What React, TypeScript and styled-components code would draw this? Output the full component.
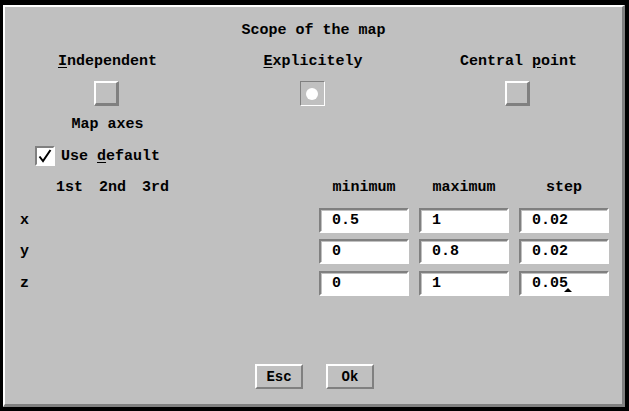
import styled, { createGlobalStyle } from 'styled-components';

const GlobalStyle = createGlobalStyle`
  html, body {
    margin: 0;
    padding: 0;
    background: #000;
  }
  body {
    font-family: "Liberation Mono", "DejaVu Sans Mono", monospace;
    font-size: 15px;
    font-weight: bold;
    color: #000;
  }
`;

const Dialog = styled.div`
  margin: 5px 4px 4px 3px;
  width: 622px;
  height: 402px;
  box-sizing: border-box;
  background: #c0c0c0;
  border-top: 2px solid #fff;
  border-left: 2px solid #fff;
  border-bottom: 3px solid #808080;
  border-right: 3px solid #808080;
  display: flex;
  flex-direction: column;
`;

const Title = styled.div`
  margin-top: 15px;
  height: 18px;
  line-height: 18px;
  text-align: center;
`;

const Options = styled.div`
  margin-top: 13px;
  display: grid;
  grid-template-columns: 205px 206px 205px;
`;

const Option = styled.div`
  display: flex;
  flex-direction: column;
  align-items: center;
`;

const Label = styled.div`
  height: 18px;
  line-height: 18px;
  white-space: pre;
`;

const Key = styled.span`
  text-decoration: underline;
  text-underline-offset: 2px;
`;

const Toggle = styled.div<{ $on?: boolean }>`
  margin-top: 10px;
  margin-right: 2px;
  width: 25px;
  height: 25px;
  box-sizing: border-box;
  display: flex;
  align-items: center;
  justify-content: center;
  border-style: solid;
  border-width: ${(p) => (p.$on ? '1px' : '2px 3px 3px 2px')};
  border-color: ${(p) =>
    p.$on ? '#808080 #fff #fff #808080' : '#fff #808080 #808080 #fff'};
`;

const Dot = styled.div`
  width: 12px;
  height: 12px;
  border-radius: 50%;
  background: #fff;
`;

const SubLabel = styled(Label)`
  margin-top: 10px;
`;

const CheckRow = styled.div`
  margin-top: 12px;
  padding-left: 30px;
  display: flex;
  align-items: center;
  gap: 6px;
`;

const CheckBox = styled.div`
  width: 20px;
  height: 20px;
  box-sizing: border-box;
  border-style: solid;
  border-width: 2px;
  border-color: #808080 #fff #fff #808080;
  background: #fff;
  display: flex;
  align-items: center;
  justify-content: center;
`;

const CheckText = styled(Label)`
  padding-top: 2px;
`;

const Table = styled.div`
  margin-top: 10px;
  padding: 0 13px 0 13px;
  display: grid;
  grid-template-columns: 38px 43px 43px 1fr 100px 100px 90px;
  grid-auto-rows: 25px;
  row-gap: 6.5px;
  align-items: center;
`;

const Line = styled.div`
  display: contents;
`;

const Head = styled.div<{ $wide?: boolean }>`
  width: ${(p) => (p.$wide ? '90px' : 'auto')};
  text-align: ${(p) => (p.$wide ? 'center' : 'left')};
  line-height: 18px;
  align-self: start;
  padding-top: 3px;
`;

const Axis = styled.div`
  padding-left: 2px;
  padding-top: 1px;
  line-height: 18px;
`;

const Field = styled.div`
  position: relative;
  width: 90px;
  height: 25px;
  box-sizing: border-box;
  background: #fff;
  border-style: solid;
  border-width: 2px;
  border-color: #808080 #fff #fff #808080;
  box-shadow: inset 1px 1px 0 #c0c0c0;
  padding-left: 11px;
  line-height: 22px;
  white-space: pre;
`;

const Caret = styled.span`
  position: absolute;
  top: 15px;
  width: 0;
  height: 0;
  border-left: 4px solid transparent;
  border-right: 4px solid transparent;
  border-bottom: 4px solid #000;
`;

const Buttons = styled.div`
  margin-top: auto;
  margin-bottom: 15px;
  display: flex;
  justify-content: center;
  gap: 23px;
  padding-left: 2px;
`;

const Button = styled.div`
  width: 48px;
  height: 25px;
  box-sizing: border-box;
  border-style: solid;
  border-width: 2px;
  border-color: #fff #808080 #808080 #fff;
  display: flex;
  align-items: center;
  justify-content: center;
  padding-top: 1px;
  font-size: 14px;
`;

const rows = [
  { axis: 'x', vals: ['0.5', '1', '0.02'] },
  { axis: 'y', vals: ['0', '0.8', '0.02'] },
  { axis: 'z', vals: ['0', '1', '0.05'] },
];

const App = () => {
  return (
    <>
      <GlobalStyle />
      <Dialog>
        <Title>Scope of the map</Title>
        <Options>
          <Option>
            <Label>
              <Key>I</Key>ndependent
            </Label>
            <Toggle />
            <SubLabel>Map axes</SubLabel>
          </Option>
          <Option>
            <Label>
              <Key>E</Key>xplicitely
            </Label>
            <Toggle $on>
              <Dot />
            </Toggle>
          </Option>
          <Option>
            <Label>
              Central <Key>p</Key>oint
            </Label>
            <Toggle />
          </Option>
        </Options>
        <CheckRow>
          <CheckBox>
            <svg width="14" height="14" viewBox="0 0 14 14">
              <path d="M1.5 7.5 L5 12 L12.5 1" fill="none" stroke="#000" strokeWidth="2" />
            </svg>
          </CheckBox>
          <CheckText>
            Use <Key>d</Key>efault
          </CheckText>
        </CheckRow>
        <Table>
          <Line>
            <span />
            <Head>1st</Head>
            <Head>2nd</Head>
            <Head>3rd</Head>
            <Head $wide>minimum</Head>
            <Head $wide>maximum</Head>
            <Head $wide>step</Head>
          </Line>
          {rows.map((r, ri) => (
            <Line key={r.axis}>
              <Axis>{r.axis}</Axis>
              <span />
              <span />
              <span />
              {r.vals.map((v, i) => (
                <Field key={i}>
                  {v}
                  {ri === 2 && i === 2 && <Caret style={{ left: `${11 + v.length * 9 - 4}px` }} />}
                </Field>
              ))}
            </Line>
          ))}
        </Table>
        <Buttons>
          <Button>Esc</Button>
          <Button>Ok</Button>
        </Buttons>
      </Dialog>
    </>
  );
};

export default App;
